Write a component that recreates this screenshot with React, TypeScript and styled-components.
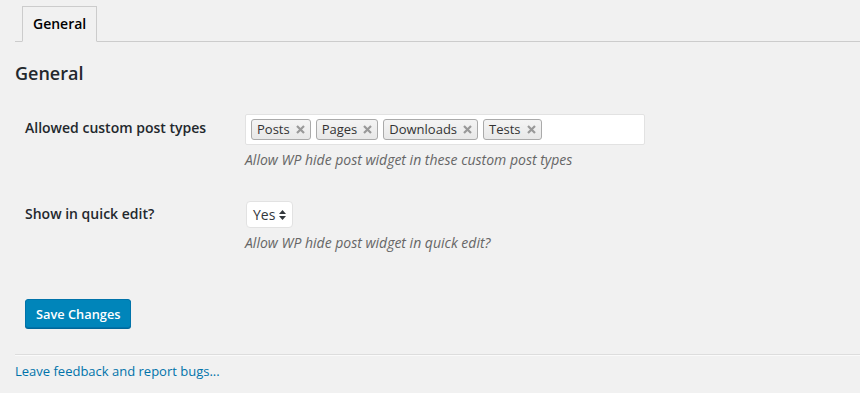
import React from "react";
import styled, { createGlobalStyle } from "styled-components";

const Global = createGlobalStyle`
  html, body { margin: 0; padding: 0; background: #f1f1f1; }
  body { font-family: "Open Sans", "Liberation Sans", sans-serif; color: #23282d; font-size: 13px; }
`;

const Page = styled.div`
  padding: 6px 0 0 15px;
  display: flex;
  flex-direction: column;
`;

const TabBar = styled.div`
  display: flex;
  padding-left: 7px;
  border-bottom: 1px solid #ccc;
  height: 35px;
`;

const Tab = styled.div`
  box-sizing: border-box;
  height: 36px;
  padding: 0 10px;
  border: 1px solid #ccc;
  border-bottom: 1px solid #f1f1f1;
  background: #f1f1f1;
  font-size: 14px;
  font-weight: 600;
  line-height: 34px;
  color: #000;
`;

const Heading = styled.h3`
  margin: 18px 0 0;
  font-size: 18px;
  font-weight: 600;
  line-height: 26px;
  color: #23282d;
`;

const Form = styled.div`
  display: flex;
  flex-direction: column;
  padding-left: 10px;
  margin-top: 28px;
`;

const Row = styled.div<{ $gap: number }>`
  display: grid;
  grid-template-columns: 220px 1fr;
  margin-bottom: ${(p) => p.$gap}px;
`;

const Label = styled.div<{ $top: number }>`
  font-size: 14px;
  font-weight: 600;
  color: #23282d;
  line-height: 20px;
  padding-top: ${(p) => p.$top}px;
`;

const Field = styled.div`
  display: flex;
  flex-direction: column;
  align-items: flex-start;
`;

const TagBox = styled.div`
  box-sizing: border-box;
  width: 400px;
  height: 31px;
  background: #fff;
  border: 1px solid #e2e2e2;
  border-radius: 2px;
  display: flex;
  align-items: center;
  gap: 5px;
  padding: 0 5px;
`;

const Tag = styled.div`
  box-sizing: border-box;
  height: 21px;
  display: flex;
  align-items: center;
  gap: 6px;
  padding: 0 5px 0 5px;
  border: 1px solid #aaa;
  border-radius: 3px;
  background: linear-gradient(#f4f4f4, #e8e8e8);
  font-size: 13px;
  color: #333;
  line-height: 19px;
`;

const Desc = styled.p`
  margin: 5px 0 0;
  font-size: 14px;
  font-style: italic;
  color: #666;
  line-height: 19px;
`;

const Select = styled.div`
  box-sizing: border-box;
  margin-left: 1px;
  height: 27px;
  width: 47px;
  background: #fff;
  border: 1px solid #e2e2e2;
  border-radius: 4px;
  display: flex;
  align-items: center;
  gap: 4px;
  padding: 0 0 0 6px;
  font-size: 14px;
  color: #32373c;
`;

const Button = styled.button`
  box-sizing: border-box;
  align-self: flex-start;
  height: 29px;
  padding: 0 10px;
  background: #0085ba;
  border: 1px solid #0073aa;
  border-radius: 3px;
  box-shadow: 0 1px 0 #006799;
  color: #fff;
  font-family: "Open Sans", "Liberation Sans", sans-serif;
  font-size: 12.8px;
  font-weight: 600;
  line-height: 26px;
`;

const Divider = styled.hr`
  margin: 26px 0 0;
  border: 0;
  border-top: 1px solid #ddd;
  border-bottom: 1px solid #fafafa;
`;

const Link = styled.a`
  margin-top: 5px;
  font-size: 13px;
  line-height: 20px;
  color: #0073aa;
  text-decoration: none;
`;

const tags = ["Posts", "Pages", "Downloads", "Tests"];

const RemoveIcon = () => (
  <svg width="9" height="9" viewBox="0 0 9 9">
    <path d="M1 1 L8 8 M8 1 L1 8" stroke="#999" strokeWidth="2.2" />
  </svg>
);

export default function App() {
  return (
    <>
      <Global />
      <Page>
        <TabBar>
          <Tab>General</Tab>
        </TabBar>
        <Heading>General</Heading>
        <Form>
          <Row $gap={32}>
            <Label $top={4}>Allowed custom post types</Label>
            <Field>
              <TagBox>
                {tags.map((t) => (
                  <Tag key={t}>
                    {t}
                    <RemoveIcon />
                  </Tag>
                ))}
              </TagBox>
              <Desc>Allow WP hide post widget in these custom post types</Desc>
            </Field>
          </Row>
          <Row $gap={47}>
            <Label $top={3}>Show in quick edit?</Label>
            <Field>
              <Select>
                Yes
                <svg width="7" height="12" viewBox="0 0 7 12">
                  <path d="M3.5 1 L7 5 H0 Z" fill="#32373c" />
                  <path d="M3.5 11 L7 7 H0 Z" fill="#32373c" />
                </svg>
              </Select>
              <Desc>Allow WP hide post widget in quick edit?</Desc>
            </Field>
          </Row>
          <Button>Save Changes</Button>
        </Form>
        <Divider />
        <Link href="#">Leave feedback and report bugs...</Link>
      </Page>
    </>
  );
}
